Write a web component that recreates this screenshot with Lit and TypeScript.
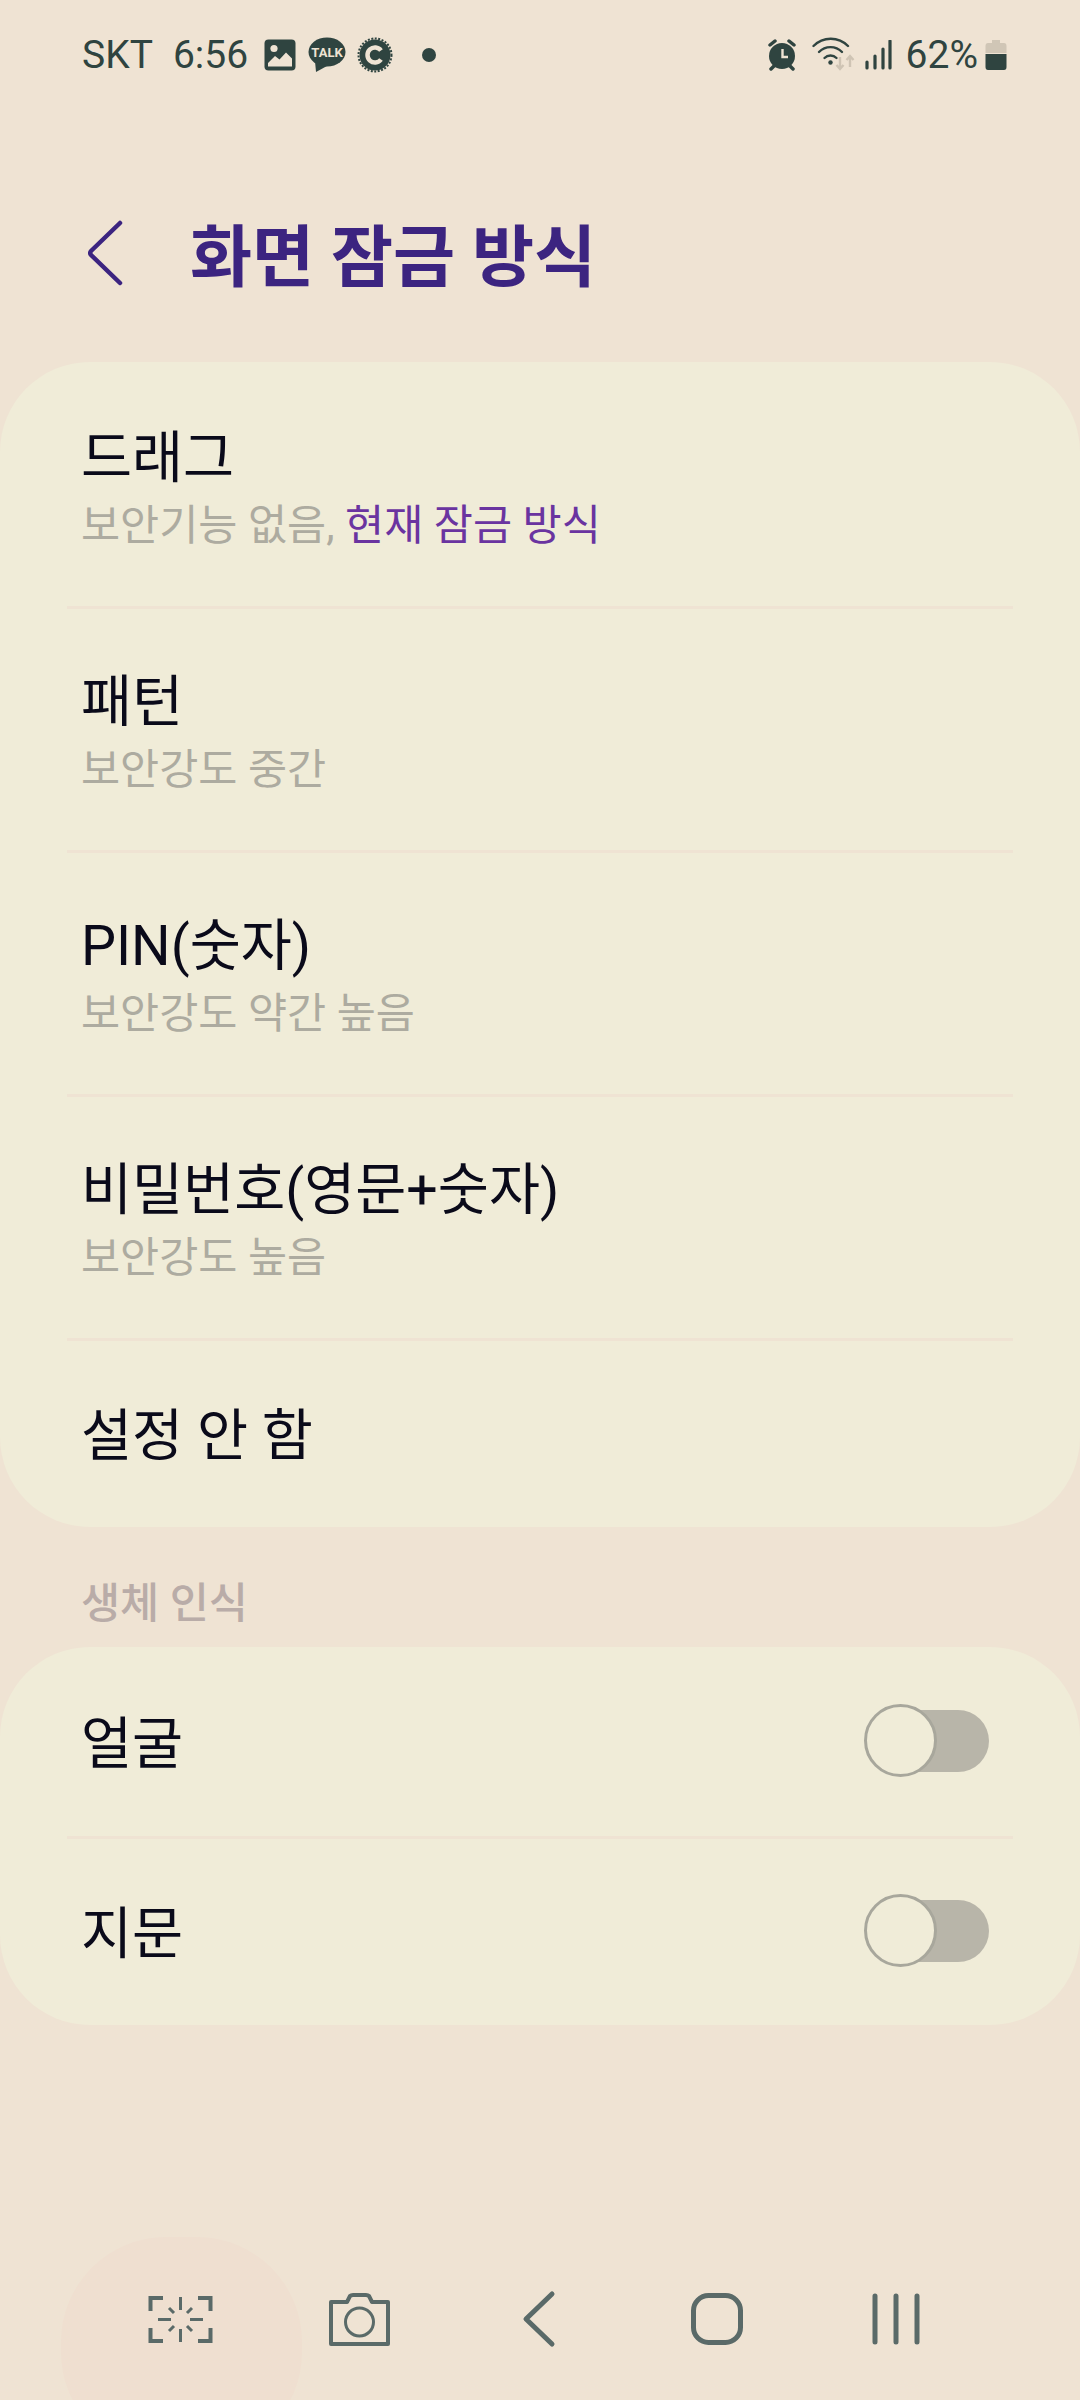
import { LitElement, html, css } from "lit";
import { customElement } from "lit/decorators.js";

@customElement("app-toggle")
class AppToggle extends LitElement {
  static styles = css`
    :host { display: block; width: 125px; height: 73px; position: relative; margin-bottom: 3px; }
    .track { position: absolute; left: 12px; right: 0; top: 6px; height: 62px; border-radius: 31px; background: #b8b5a9; }
    .thumb { position: absolute; left: 0; top: 0; width: 73px; height: 73px; box-sizing: border-box; border-radius: 50%; background: #f0ecd8; border: 3px solid #a8a79c; }
  `;
  render() { return html`<div class="track"></div><div class="thumb"></div>`; }
}

@customElement("app-root")
class AppRoot extends LitElement {
  static styles = css`
    :host { display: flex; flex-direction: column; width: 1080px; height: 2400px; background: #efe3d3; font-family: Roboto, "Noto Sans CJK KR", sans-serif; overflow: hidden; }
    .status { height: 110px; flex: none; box-sizing: border-box; padding: 0 73px 0 82px; display: flex; align-items: center; color: #2f4440; font-size: 39px; }
    .status .sp { flex: 1; }
    .status svg { display: block; flex: none; }
    .time { margin-left: 20px; margin-right: 16px; }
    .m-talk { margin-left: 12px; }
    .m-c { margin-left: 11px; }
    .m-dot { margin-left: 29px; }
    .m-wifi { margin-left: 15px; }
    .m-sig { margin-left: 8px; }
    .m-pct { margin-left: 14px; }
    .m-bat { margin-left: 7px; }
    .header { height: 252px; flex: none; box-sizing: border-box; padding: 44px 0 0 88px; display: flex; align-items: center; }
    .back { display: block; margin-bottom: 10px; }
    .title { margin-left: 66px; font-size: 67.500px; font-weight: 700; color: #3c2480; line-height: 1; }
    .card { background: #f0ecd8; border-radius: 90px; flex: none; }
    .row { height: 244px; box-sizing: border-box; margin: 0 67px; padding: 0 14px; display: flex; flex-direction: column; justify-content: center; border-bottom: 3px solid #efe3d3; }
    .row.first { height: 247px; padding-top: 3px; }
    .row.plain { height: 186px; border-bottom: 0; }
    .t { font-size: 55.500px; color: #0a0a1a; line-height: 66px; padding-top: 6px; }
    .s { font-size: 42.500px; color: #adaba0; line-height: 52px; margin-top: 8px; }
    .s b { font-weight: 400; color: #6a34a0; }
    .sw { flex-direction: row; align-items: center; justify-content: space-between; padding-right: 0; margin-right: 91px; border-bottom: 0; height: 186px; }
    .sw.top { height: 189px; }
    .divider { height: 3px; background: #efe3d3; margin: 0 67px; }
    .label { height: 120px; flex: none; box-sizing: border-box; padding: 47px 0 0 81px; font-size: 42.500px; font-weight: 500; color: #b9aca8; line-height: 60px; }
    .nav { margin-top: auto; height: 165px; flex: none; display: block; }
  `;

  private row(title: string, sub: unknown, cls = "") {
    return html`<div class="row ${cls}"><div class="t">${title}</div><div class="s">${sub}</div></div>`;
  }

  render() {
    return html`
      <div class="status">
        <span>SKT</span><span class="time">6:56</span>
        <svg width="32" height="32" viewBox="0 0 32 32"><rect width="31" height="31" x=".5" y=".5" rx="4" fill="#2f4440"/><circle cx="10" cy="9.500" r="3.600" fill="#efe3d3"/><path d="M4 24 L11 17 L15.500 20.500 L22 13.500 L28 19.500 V27.500 H4Z" fill="#efe3d3"/></svg>
        <svg class="m-talk" width="38" height="36" viewBox="0 0 38 36"><ellipse cx="19" cy="15" rx="18.500" ry="14.500" fill="#2f4440"/><path d="M7 24 L8 35 L19 29Z" fill="#2f4440"/><text x="19" y="20" font-size="13" font-weight="700" fill="#efe3d3" text-anchor="middle" font-family="Roboto">TALK</text></svg>
        <svg class="m-c" width="36" height="36" viewBox="0 0 36 36"><circle cx="18" cy="18" r="15.500" fill="#2f4440"/><circle cx="18" cy="18" r="16.500" fill="none" stroke="#2f4440" stroke-width="2" stroke-dasharray="2 1.500"/><path d="M24 13.500 A7.500 7.500 0 1 0 24 22.500" fill="none" stroke="#efe3d3" stroke-width="4.500"/></svg>
        <svg class="m-dot" width="14" height="14" viewBox="0 0 14 14"><circle cx="7" cy="7" r="7" fill="#2f4440"/></svg>
        <span class="sp"></span>
        <svg width="30" height="32" viewBox="0 0 30 32"><circle cx="15" cy="17" r="13" fill="#2f4440"/><path d="M3 6 L8 2 M27 6 L22 2 M7 27 L4 30 M23 27 L26 30" stroke="#2f4440" stroke-width="3.500" stroke-linecap="round"/><path d="M15.500 10 V18 H21" fill="none" stroke="#efe3d3" stroke-width="2.400"/></svg>
        <svg class="m-wifi" width="44" height="36" viewBox="0 0 44 36"><g fill="none" stroke="#2f4440" stroke-width="2.400" stroke-linecap="round"><path d="M1.500 9 A24 24 0 0 1 36 9"/><path d="M7 15 A16 16 0 0 1 30 15"/><path d="M12.500 21 A8.500 8.500 0 0 1 24.500 21"/></g><circle cx="18.500" cy="25.500" r="2.200" fill="#2f4440"/><path d="M28 20 V32 M24.500 28 L28 32 L31.500 28 M38 30 V19 M34.500 23 L38 19 L41.500 23" fill="none" stroke="#cfc4b4" stroke-width="2.400"/></svg>
        <svg class="m-sig" width="28" height="30" viewBox="0 0 28 30"><path d="M3 22 V28 M11 16 V28 M19 9 V28 M26 1 V28" stroke="#2f4440" stroke-width="3.200" stroke-linecap="round"/></svg>
        <span class="m-pct">62%</span>
        <svg class="m-bat" width="22" height="32" viewBox="0 0 22 32"><path d="M7 1 H15 V4 H19 Q21.500 4 21.500 7 V14 H.5 V7 Q.5 4 3 4 H7Z" fill="#d0c6b6"/><path d="M.5 15 H21.500 V28 Q21.500 31 19 31 H3 Q.5 31 .5 28Z" fill="#2f4440"/></svg>
      </div>
      <div class="header">
        <svg class="back" width="36" height="66" viewBox="0 0 36 66"><path d="M32 3 L3 31 Q1.500 33 3 35 L32 63" fill="none" stroke="#3c2480" stroke-width="4.500" stroke-linecap="round" stroke-linejoin="round"/></svg>
        <div class="title">화면 잠금 방식</div>
      </div>
      <div class="card">
        ${this.row("드래그", html`보안기능 없음, <b>현재 잠금 방식</b>`, "first")}
        ${this.row("패턴", "보안강도 중간")}
        ${this.row("PIN(숫자)", "보안강도 약간 높음")}
        ${this.row("비밀번호(영문+숫자)", "보안강도 높음")}
        <div class="row plain"><div class="t">설정 안 함</div></div>
      </div>
      <div class="label">생체 인식</div>
      <div class="card">
        <div class="row sw top"><div class="t">얼굴</div><app-toggle></app-toggle></div>
        <div class="divider"></div>
        <div class="row sw"><div class="t">지문</div><app-toggle></app-toggle></div>
      </div>
      <svg class="nav" width="1080" height="165" viewBox="0 2235 1080 165" fill="none" stroke="#5a6a68" stroke-linecap="round">
        <rect x="61" y="2237" width="241" height="220" rx="105" fill="#efdfd0" stroke="none"/>
        <path d="M163 2298 H150.500 V2311 M198 2298 H210.500 V2311 M150.500 2328 V2341 H163 M210.500 2328 V2341 H198" stroke-width="4" stroke-linecap="butt"/>
        <path d="M180.500 2297 V2310 M180.500 2329 V2342 M158 2319.500 H171 M190 2319.500 H203 M169 2308 L174 2313 M192 2308 L187 2313 M169 2331 L174 2326 M192 2331 L187 2326" stroke-width="3" stroke-linecap="butt"/>
        <path d="M331 2344 V2302 H347 L350 2296 Q351 2295 353 2295 H366 Q368 2295 369 2296 L372 2302 H388 V2344Z" stroke-width="4" stroke-linejoin="round"/>
        <circle cx="359.500" cy="2322" r="14" stroke-width="3"/>
        <path d="M552 2294 L526 2319 L552 2344" stroke-width="5" stroke-linejoin="round"/>
        <rect x="693.500" y="2295.500" width="47" height="47" rx="15" stroke-width="5"/>
        <path d="M875 2296 V2342 M896 2296 V2342 M917 2296 V2342" stroke-width="5"/>
      </svg>
    `;
  }
}
